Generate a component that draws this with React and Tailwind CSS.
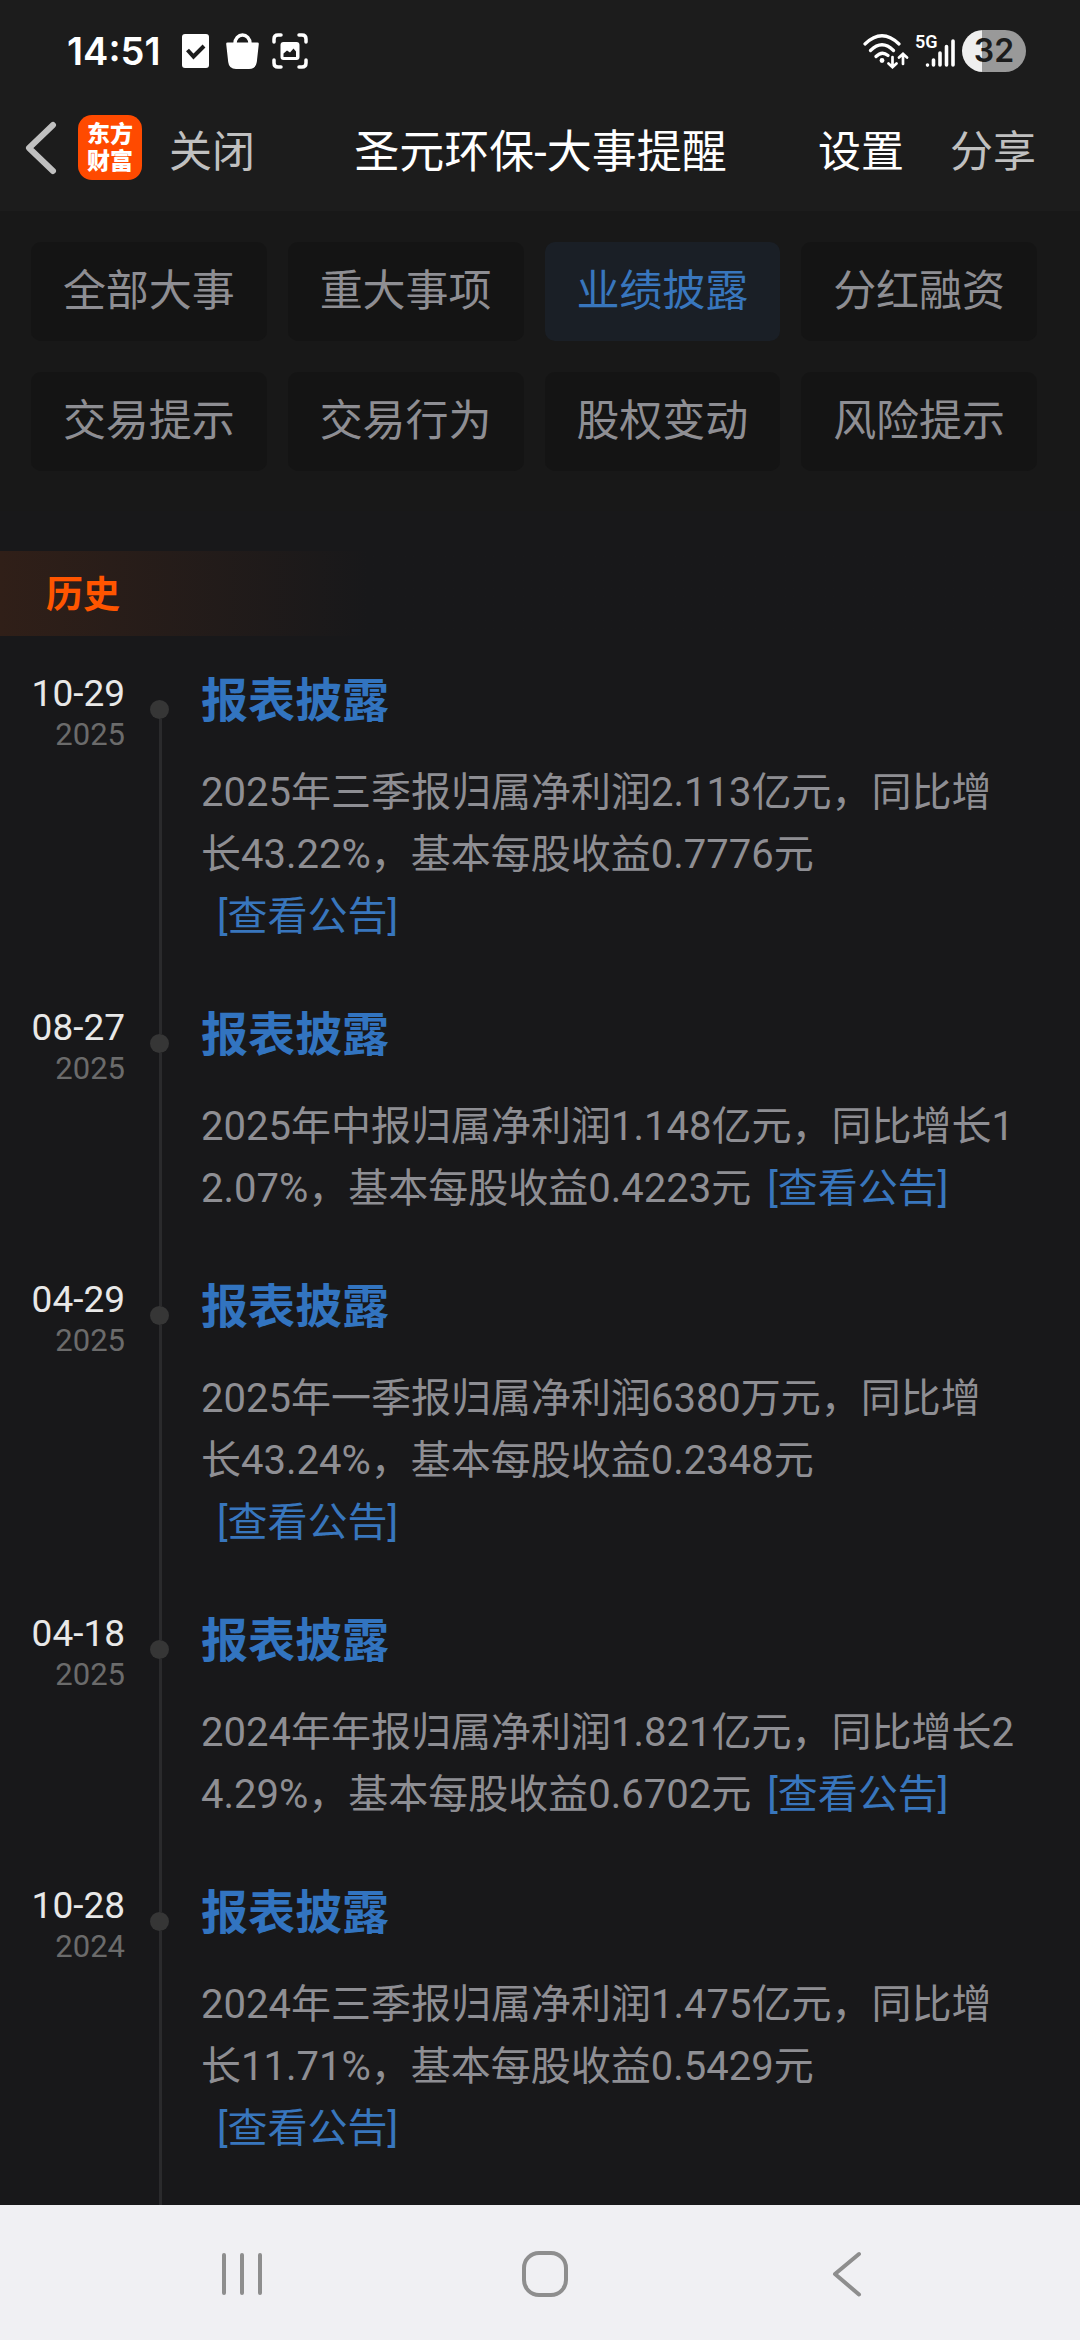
const tabs = [
  "全部大事", "重大事项", "业绩披露", "分红融资",
  "交易提示", "交易行为", "股权变动", "风险提示",
];

const events = [
  { day: "10-29", year: "2025", text: "2025年三季报归属净利润2.113亿元，同比增长43.22%，基本每股收益0.7776元" },
  { day: "08-27", year: "2025", text: "2025年中报归属净利润1.148亿元，同比增长12.07%，基本每股收益0.4223元" },
  { day: "04-29", year: "2025", text: "2025年一季报归属净利润6380万元，同比增长43.24%，基本每股收益0.2348元" },
  { day: "04-18", year: "2025", text: "2024年年报归属净利润1.821亿元，同比增长24.29%，基本每股收益0.6702元" },
  { day: "10-28", year: "2024", text: "2024年三季报归属净利润1.475亿元，同比增长11.71%，基本每股收益0.5429元" },
];

function StatusBar() {
  return (
    <div className="flex h-[100px] items-center justify-between pt-[2px] pl-[67px] pr-[54px] font-['Inter','Noto_Sans_CJK_SC',sans-serif]">
      <div className="flex items-center">
        <span className="w-[115px] text-[38px] font-semibold leading-none">14:51</span>
        <svg className="h-[36px] w-[27px]" viewBox="0 0 27 36" aria-hidden="true">
          <rect x="0" y="1" width="27" height="34" rx="3" fill="#fff" />
          <path d="M5.500 17l6 6.500L22 13" fill="none" stroke="#1c1c1c" strokeWidth="4" />
        </svg>
        <svg className="ml-[17px] h-[36px] w-[33px]" viewBox="0 0 33 36" aria-hidden="true">
          <path d="M1.500 9.500h30q1.500 0 1.300 1.500l-2 18q-.8 7-7.800 7h-13q-7 0-7.800-7l-2-18q-.2-1.500 1.300-1.500z" fill="#fff" />
          <path d="M9 10.500c0-5 3.500-8.500 7.500-8.500s7.500 3.500 7.500 8.500" fill="none" stroke="#fff" strokeWidth="3.500" />
        </svg>
        <svg className="ml-[13px] h-[36px] w-[36px]" viewBox="0 0 36 36" fill="none" aria-hidden="true">
          <path d="M2 9V6q0-4 4-4h3M27 2h3q4 0 4 4v3M34 27v3q0 4-4 4h-3M9 34H6q-4 0-4-4v-3" stroke="#fff" strokeWidth="3.500" strokeLinecap="round" />
          <rect x="8.500" y="9" width="19" height="18" rx="3" fill="#fff" />
          <path d="M11.500 24v-3.500l3.500-3 3 2 3.500-4 2.500 3v5.500z" fill="#1c1c1c" />
        </svg>
      </div>
      <div className="flex items-center">
        <svg className="h-[36px] w-[46px]" viewBox="0 0 46 36" fill="none" stroke="#fff" strokeLinecap="round" aria-hidden="true">
          <path d="M2 11Q19 -5.500 36 11M7.500 17.500Q19 6 30.500 17.500M13 23.500Q19 17.500 25 22.500" strokeWidth="3.200" />
          <circle cx="19" cy="27.500" r="2.400" fill="#fff" stroke="none" />
          <path d="M29.500 24v9.500M25.500 30.500l4 3.700 4-3.700M40 31V21.500M36 24.500l4-3.700 4 3.700" strokeWidth="2.700" />
        </svg>
        <div className="relative ml-[6px] h-[36px] w-[40px]">
          <span className="absolute left-0 top-0 font-['Roboto',sans-serif] text-[18px] font-semibold leading-[18px]">5G</span>
          <svg className="h-[36px] w-[40px]" viewBox="0 0 40 36" stroke="#fff" strokeWidth="3.600" strokeLinecap="round" aria-hidden="true">
            <path d="M12.500 32v0.100M18.500 27v5M25 20v12M31.500 13.500v18.500M38 8v24" />
          </svg>
        </div>
        <div className="ml-[7px] flex h-[42px] w-[64px] items-center justify-center rounded-full bg-linear-to-r from-[#efefef] from-[31%] to-[#999999] to-[31%] text-[32px] font-semibold leading-none text-[#1c1c1c]">
          32
        </div>
      </div>
    </div>
  );
}

function NavBar() {
  return (
    <nav className="flex h-[111px] items-center pb-[16px] pl-[22px] pr-[44px] text-[43px] leading-[60px]">
      <button type="button" aria-label="返回">
        <svg className="h-[54px] w-[36px]" viewBox="0 0 36 54" fill="none" aria-hidden="true">
          <path d="M31 4L7 27l24 23" stroke="#c0c0c0" strokeWidth="6" strokeLinecap="round" strokeLinejoin="round" />
        </svg>
      </button>
      <div className="ml-5 grid h-[65px] w-[64px] shrink-0 content-center justify-center rounded-[14px] bg-[#ff4a00] text-center text-[23px] font-black leading-[27px]">
        <span>东方</span>
        <span>财富</span>
      </div>
      <button type="button" className="ml-[27px] pt-2 text-[#c0c0c0]">关闭</button>
      <h1 className="flex-1 pl-2 pt-[10px] text-center text-[45px]">圣元环保-大事提醒</h1>
      <button type="button" className="pt-2">设置</button>
      <button type="button" className="ml-[46px] pt-2 text-[#c0c0c0]">分享</button>
    </nav>
  );
}

function EventItem({ item, first }) {
  return (
    <li className="flex last:flex-1">
      <div className="w-[125px] shrink-0 pt-[37px] text-right">
        <div className="text-[37px] leading-[42px] text-[#e8e8e8]">{item.day}</div>
        <div className="text-[31px] leading-[40px] text-[#6b6b6b]">{item.year}</div>
      </div>
      <div className="ml-[25px] flex w-[21px] shrink-0 flex-col items-center">
        <span className={first ? "h-16 w-[3px]" : "h-16 w-[3px] bg-[#2a2a2c]"} />
        <span className="h-[19px] w-[19px] self-start rounded-full bg-[#363636]" />
        <span className="w-[3px] flex-1 bg-[#2a2a2c]" />
      </div>
      <div className="ml-[30px] flex-1 pb-[22px] pr-[62px] pt-[34px]">
        <h2 className="text-[47px] font-bold leading-[62px] text-[#3274c0]">报表披露</h2>
        <p className="mt-[30px] break-all text-[40px] leading-[62px] text-[#8e8e93]">
          {item.text}
          <a href="#notice" className="mx-4 inline-block text-[#3876bd]">[查看公告]</a>
        </p>
      </div>
    </li>
  );
}

export default function App() {
  return (
    <div className="flex h-screen flex-col bg-[#18181a] font-['Roboto','Noto_Sans_CJK_SC',sans-serif] text-white">
      <header className="shrink-0 bg-[#1c1c1c]">
        <StatusBar />
        <NavBar />
      </header>
      <main className="flex min-h-0 flex-1 flex-col overflow-y-auto [scrollbar-width:none]">
        <div className="grid shrink-0 grid-cols-4 gap-x-[21px] gap-y-[31px] bg-[#181818] pb-10 pl-[31px] pr-[43px] pt-[31px]">
          {tabs.map((tab) => (
            <button
              key={tab}
              type="button"
              aria-pressed={tab === "业绩披露"}
              className={
                tab === "业绩披露"
                  ? "h-[99px] rounded-[10px] bg-[#1a1f26] text-[43px] text-[#3876bd]"
                  : "h-[99px] rounded-[10px] bg-[#141414] text-[43px] text-[#8e8e93]"
              }
            >
              {tab}
            </button>
          ))}
        </div>
        <div className="mt-10 flex h-[85px] shrink-0 items-center bg-linear-to-r from-[#301f18] to-[#18181a] to-[34%] pl-[46px] pt-1 text-[37px] font-bold text-[#ff5500]">
          历史
        </div>
        <ul className="flex flex-1 flex-col">
          {events.map((item, i) => (
            <EventItem key={item.day} item={item} first={i === 0} />
          ))}
        </ul>
      </main>
      <footer className="flex h-[135px] shrink-0 items-center justify-between bg-[#f0f0f3] pl-[219px] pr-[210px] pt-[3px]">
        <button type="button" aria-label="最近任务">
          <svg className="h-[46px] w-[46px]" viewBox="0 0 46 46" fill="none" stroke="#8e8e8e" strokeWidth="4" strokeLinecap="round" aria-hidden="true">
            <path d="M5 4v38M23 4v38M41 4v38" />
          </svg>
        </button>
        <button type="button" aria-label="主屏幕">
          <svg className="h-[46px] w-[46px]" viewBox="0 0 46 46" fill="none" stroke="#8e8e8e" strokeWidth="4" aria-hidden="true">
            <rect x="2" y="2" width="42" height="42" rx="15" />
          </svg>
        </button>
        <button type="button" aria-label="后退">
          <svg className="h-[46px] w-[46px]" viewBox="0 0 46 46" fill="none" stroke="#8e8e8e" strokeWidth="4" strokeLinecap="round" strokeLinejoin="round" aria-hidden="true">
            <path d="M35 3L11 23l24 20.500" />
          </svg>
        </button>
      </footer>
    </div>
  );
}
